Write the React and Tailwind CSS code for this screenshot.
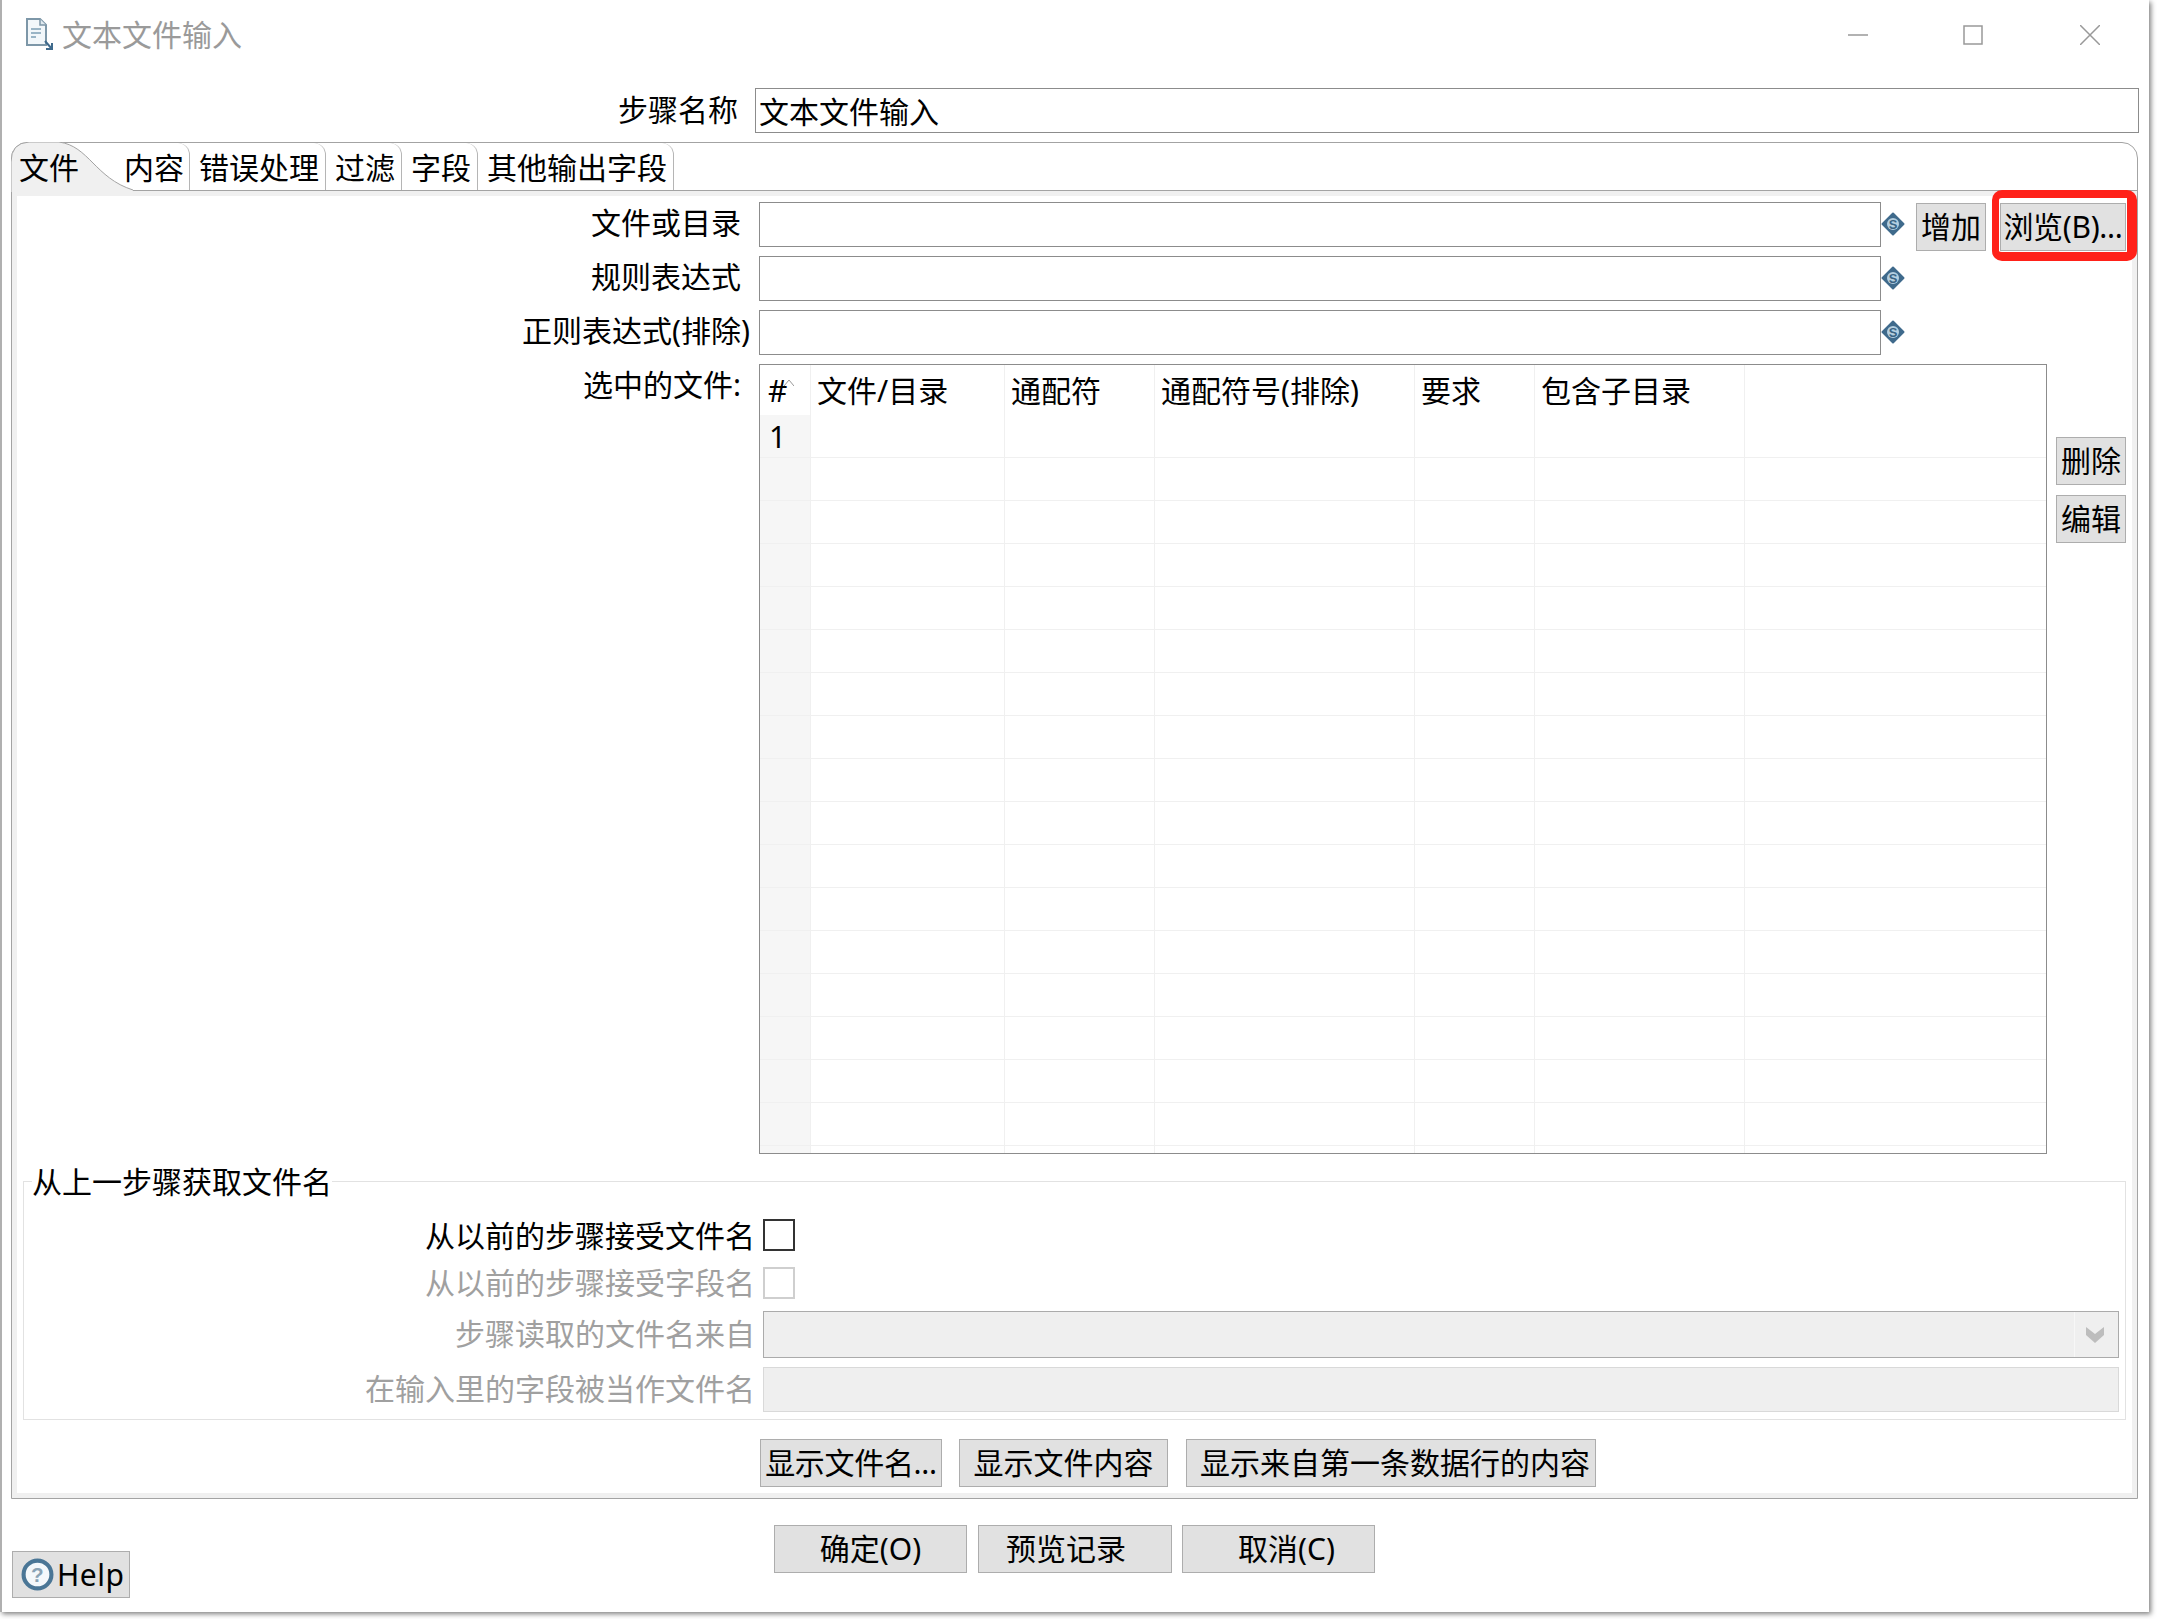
import React from 'react';

function Btn({ className = '', children }) {
  return (
    <div className={'flex shrink-0 items-center justify-center whitespace-nowrap border border-[#adadad] bg-[#e1e1e1] text-black ' + className}>
      {children}
    </div>
  );
}

function VarIcon() {
  return (
    <svg width="24" height="24" viewBox="0 0 24 24" className="shrink-0">
      <path d="M12 1.5 L22.5 12 L12 22.5 L1.5 12 Z" fill="#3f6a8c" stroke="#3f6a8c" strokeWidth="2" strokeLinejoin="round" />
      <circle cx="12" cy="12" r="6" fill="#b4cfe0" />
      <text x="12" y="16.5" textAnchor="middle" fontSize="13" fontWeight="700" fontFamily="Liberation Sans" fill="#3a6485">S</text>
    </svg>
  );
}

const cols = ['w-[51px]', 'w-[194px]', 'w-[150px]', 'w-[260px]', 'w-[120px]', 'w-[210px]', 'flex-1'];
const headers = ['#', '文件/目录', '通配符', '通配符号(排除)', '要求', '包含子目录', ''];

function Row({ index }) {
  const isTail = index === 17;
  return (
    <div className={(isTail ? 'h-[7px] ' : 'h-[43px] border-b border-[#f0f0f0] ') + 'flex'}>
      {cols.map((c, i) => (
        <div
          key={i}
          className={
            c +
            (i < 6 ? ' border-r border-[#f0f0f0]' : '') +
            (i === 0 ? ' bg-[#f6f6f6] pl-[9px] leading-[43px]' : '')
          }
        >
          {i === 0 && index === 0 ? '1' : ''}
        </div>
      ))}
    </div>
  );
}

export default function App() {
  const rows = Array.from({ length: 18 }, (_, i) => i);
  return (
    <div className="h-[1619px] w-[2157px] overflow-hidden bg-white text-[30px] leading-[40px] text-black [font-family:'Noto_Sans','Noto_Sans_CJK_SC',sans-serif]">
      <div className="h-[1612px] w-[2149px] bg-white shadow-[inset_2px_0_0_#b0b0b0,2px_2px_5px_rgba(0,0,0,0.5)]">
        {/* title bar */}
        <div className="mb-[18px] flex h-[70px] items-center pl-[25px] pr-[49px]">
          <svg width="30" height="34" viewBox="0 0 30 34" className="shrink-0">
            <path d="M2 1 H15 L21 7 V27 H2 Z" fill="#f2f7fa" stroke="#7d97a8" strokeWidth="2" />
            <path d="M15 1 V7 H21" fill="#dfe9ef" stroke="#7d97a8" strokeWidth="1.5" />
            <path d="M6 11 H16 M6 15 H16 M6 19 H11" stroke="#9ab5c6" strokeWidth="2" />
            <path d="M20 23 L27 31 M27 25 V31 H21" fill="none" stroke="#3f6a8c" strokeWidth="2" />
          </svg>
          <span className="ml-[7px] text-[#9a9a9a]">文本文件输入</span>
          <div className="ml-auto flex items-center">
            <svg width="20" height="20" viewBox="0 0 20 20"><path d="M0 10 H20" stroke="#999" strokeWidth="1.5" /></svg>
            <svg width="20" height="20" viewBox="0 0 20 20" className="ml-[95px]"><rect x="1" y="1" width="18" height="18" fill="none" stroke="#999" strokeWidth="1.5" /></svg>
            <svg width="20" height="20" viewBox="0 0 20 20" className="ml-[97px]"><path d="M0 0 L20 20 M20 0 L0 20" stroke="#999" strokeWidth="1.5" /></svg>
          </div>
        </div>

        {/* step name */}
        <div className="flex h-[45px] items-center">
          <div className="w-[738px] pb-[2px] text-right">步骤名称</div>
          <div className="ml-[17px] h-[45px] w-[1384px] border border-[#8c8c8c] pl-[3px] leading-[46px]">文本文件输入</div>
        </div>

        {/* tab folder */}
        <div className="ml-[11px] mt-[9px] h-[1357px] w-[2127px] rounded-t-[16px] border border-[#a3a3a3]">
          <div className="flex h-[48px] border-b border-[#a3a3a3] leading-[50px]">
            <div className="relative w-[112px] shrink-0">
              <svg width="126" height="50" viewBox="0 0 126 50" className="absolute left-[-1px] top-[-1px]">
                <path d="M0 50 V20 Q0 1 18 0 H48 C78 4 84 36 122 48 L122 50 Z" fill="#f0f0f0" />
                <path d="M0 50 V20 Q0 1 18 0 H48 C78 4 84 36 122 48" fill="none" stroke="#a3a3a3" />
              </svg>
              <span className="absolute left-[7px] top-0 whitespace-nowrap">文件</span>
            </div>
            <div className="flex rounded-tr-[12px] border-r border-[#b5b5b5] pr-[5px]"><span className="relative">内容</span></div>
            <div className="rounded-tr-[12px] border-r border-[#b5b5b5] pl-[9px] pr-[6px]">错误处理</div>
            <div className="rounded-tr-[12px] border-r border-[#b5b5b5] pl-[9px] pr-[6px]">过滤</div>
            <div className="rounded-tr-[12px] border-r border-[#b5b5b5] pl-[9px] pr-[6px]">字段</div>
            <div className="rounded-tr-[12px] border-r border-[#b5b5b5] pl-[9px] pr-[6px]">其他输出字段</div>
          </div>

          <div className="h-[1307px] border-[5px] border-[#f0f0f0] pt-[6px]">
            {/* file row */}
            <div className="flex h-[54px] items-start">
              <div className="w-[724px] text-right leading-[41px]">文件或目录</div>
              <div className="ml-[18px] h-[45px] w-[1122px] border border-[#8c8c8c]" />
              <div className="mt-[10px]"><VarIcon /></div>
              <Btn className="ml-[11px] mt-[1px] h-[48px] w-[70px]">增加</Btn>
              <div className="relative ml-[14px] mt-[1px]">
                <Btn className="h-[48px] w-[126px] tracking-[-0.3px]">浏览(B)...</Btn>
                <div className="absolute bottom-[-10px] left-[-8px] right-[-11px] top-[-13px] rounded-[10px] border-b-[9px] border-l-[7px] border-r-[10px] border-t-[8px] border-[#ff2119]" />
              </div>
            </div>
            <div className="flex h-[54px] items-start">
              <div className="w-[724px] text-right leading-[41px]">规则表达式</div>
              <div className="ml-[18px] h-[45px] w-[1122px] border border-[#8c8c8c]" />
              <div className="mt-[10px]"><VarIcon /></div>
            </div>
            <div className="flex h-[54px] items-start">
              <div className="w-[733px] whitespace-nowrap text-right leading-[41px]">正则表达式(排除)</div>
              <div className="ml-[9px] h-[45px] w-[1122px] border border-[#8c8c8c]" />
              <div className="mt-[10px]"><VarIcon /></div>
            </div>

            {/* table row */}
            <div className="flex h-[790px] items-start">
              <div className="w-[724px] text-right leading-[42px]">选中的文件:</div>
              <div className="ml-[18px] h-[790px] w-[1288px] border border-[#8c8c8c]">
                <div className="flex h-[50px]">
                  {cols.map((c, i) => (
                    <div key={i} className={c + (i < 6 ? ' border-r border-[#f0f0f0]' : '') + (i === 0 ? ' relative pl-[8px]' : ' pl-[6px]') + ' whitespace-nowrap leading-[52px]'}>
                      {headers[i]}
                      {i === 0 && (
                        <svg width="10" height="6" viewBox="0 0 10 6" className="absolute left-[24px] top-[15px]">
                          <path d="M0 6 L5 0 L10 6" fill="none" stroke="#999" />
                        </svg>
                      )}
                    </div>
                  ))}
                </div>
                {rows.map((i) => <Row key={i} index={i} />)}
              </div>
              <div className="ml-[9px] flex flex-col">
                <Btn className="mt-[73px] h-[48px] w-[70px]">删除</Btn>
                <Btn className="mt-[10px] h-[48px] w-[70px]">编辑</Btn>
              </div>
            </div>

            {/* group */}
            <div className="ml-[6px] mt-[27px] h-[239px] w-[2103px] border border-[#e2e2e2]">
              <div className="-mt-[22px] ml-[8px] h-[42px] w-fit bg-white leading-[44px]">从上一步骤获取文件名</div>
              <div className="mt-[17px] flex h-[32px] items-center">
                <div className="w-[731px] pt-[2px] text-right">从以前的步骤接受文件名</div>
                <div className="ml-[8px] h-[32px] w-[32px] border-2 border-[#333]" />
              </div>
              <div className="mt-[16px] flex h-[32px] items-center text-[#a0a0a0]">
                <div className="w-[731px] text-right">从以前的步骤接受字段名</div>
                <div className="ml-[8px] h-[32px] w-[32px] border-2 border-[#cfcfcf]" />
              </div>
              <div className="mt-[12px] flex h-[47px] items-center text-[#a0a0a0]">
                <div className="w-[731px] pb-[2px] text-right">步骤读取的文件名来自</div>
                <div className="ml-[8px] flex h-[47px] w-[1356px] justify-end border border-[#ababab] bg-[#efefef]">
                  <div className="flex w-[44px] items-center justify-center border-l border-[#f7f7f7] pr-[3px]">
                    <svg width="18" height="16" viewBox="0 0 18 16"><path d="M0 0 L9 7 L18 0 V8 L9 16 L0 8 Z" fill="#bdbdbd" /></svg>
                  </div>
                </div>
              </div>
              <div className="mt-[9px] flex h-[45px] items-center text-[#a0a0a0]">
                <div className="w-[731px] pb-[2px] text-right">在输入里的字段被当作文件名</div>
                <div className="ml-[8px] h-[45px] w-[1356px] border border-[#d9d9d9] bg-[#efefef]" />
              </div>
            </div>

            {/* show buttons */}
            <div className="mt-[19px] flex">
              <Btn className="ml-[743px] h-[48px] w-[182px] tracking-[-0.3px]">显示文件名...</Btn>
              <Btn className="ml-[17px] h-[48px] w-[209px]">显示文件内容</Btn>
              <Btn className="ml-[18px] h-[48px] w-[410px] pl-[8px]">显示来自第一条数据行的内容</Btn>
            </div>
          </div>
        </div>

        {/* bottom buttons */}
        <div className="flex items-start">
          <Btn className="ml-[12px] mt-[52px] h-[47px] w-[118px] justify-start gap-[3px] pl-[8px] tracking-[0.5px]">
            <svg width="33" height="33" viewBox="0 0 32 32" className="shrink-0">
              <circle cx="16" cy="16" r="13.5" fill="#f4f8fb" stroke="#4a7696" strokeWidth="4" />
              <text x="16" y="23" textAnchor="middle" fontSize="20" fontWeight="700" fontFamily="Liberation Sans" fill="#8aa3b5">?</text>
            </svg>
            <span>Help</span>
          </Btn>
          <Btn className="ml-[644px] mt-[26px] h-[48px] w-[193px]">确定(O)</Btn>
          <Btn className="ml-[11px] mt-[26px] h-[48px] w-[194px] pr-[18px]">预览记录</Btn>
          <Btn className="ml-[10px] mt-[26px] h-[48px] w-[193px] pl-[16px]">取消(C)</Btn>
        </div>
      </div>
    </div>
  );
}
